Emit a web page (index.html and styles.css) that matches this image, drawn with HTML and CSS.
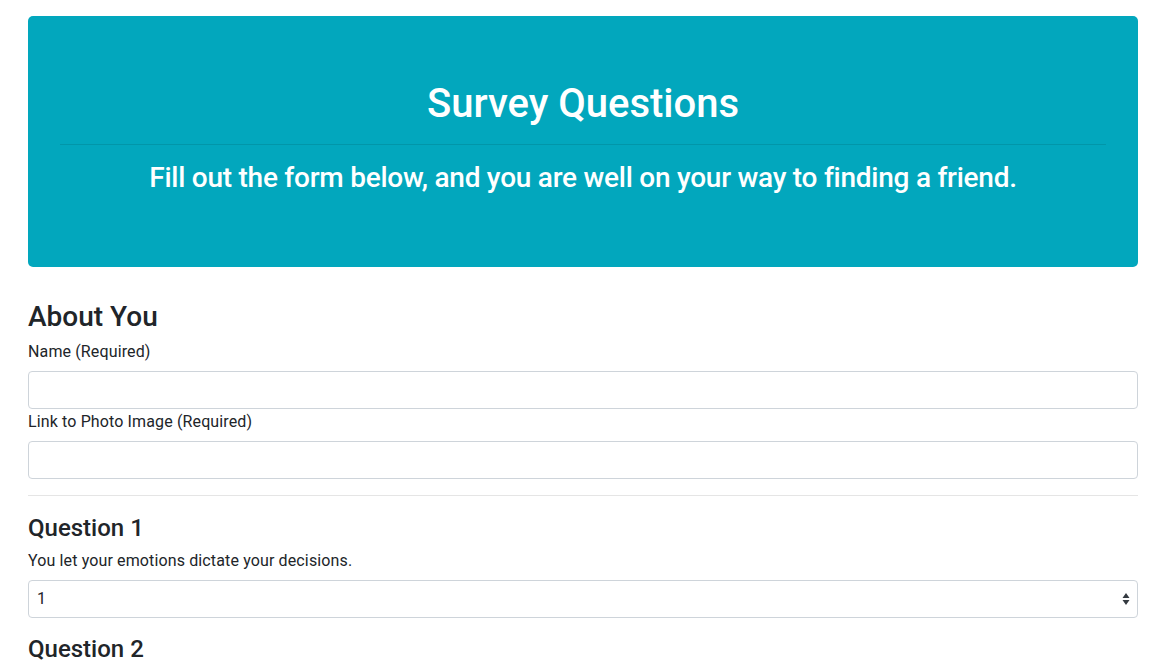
FILE: index.html
```html
<!DOCTYPE html>
<html lang="en">
<head>
<meta charset="utf-8">
<title>Survey Questions</title>
<link rel="stylesheet" href="styles.css">
</head>
<body>
<div class="container">
  <header class="jumbotron">
    <h1 class="title">Survey Questions</h1>
    <hr class="jumbo-rule">
    <h3 class="subtitle">Fill out the form below, and you are well on your way to finding a friend.</h3>
  </header>

  <form class="survey">
    <h3 class="section-title">About You</h3>
    <label class="field-label" for="name">Name (Required)</label>
    <input class="field-input" id="name" type="text">
    <label class="field-label" for="photo">Link to Photo Image (Required)</label>
    <input class="field-input" id="photo" type="text">

    <hr class="divider">

    <div class="question">
      <h4 class="question-title">Question 1</h4>
      <label class="field-label" for="q1">You let your emotions dictate your decisions.</label>
      <div class="select-wrap">
        <select class="field-select" id="q1">
          <option>1</option>
          <option>2</option>
          <option>3</option>
          <option>4</option>
          <option>5</option>
        </select>
        <svg class="select-arrows" width="8" height="14" viewBox="0 0 8 14"><path d="M4 1 L7.5 6 H0.5 Z M4 13 L7.5 8 H0.5 Z" fill="#343a40"/></svg>
      </div>
    </div>

    <div class="question">
      <h4 class="question-title">Question 2</h4>
      <label class="field-label" for="q2">You find it easy to introduce yourself to other people.</label>
      <div class="select-wrap">
        <select class="field-select" id="q2">
          <option>1</option>
          <option>2</option>
          <option>3</option>
          <option>4</option>
          <option>5</option>
        </select>
        <svg class="select-arrows" width="8" height="14" viewBox="0 0 8 14"><path d="M4 1 L7.5 6 H0.5 Z M4 13 L7.5 8 H0.5 Z" fill="#343a40"/></svg>
      </div>
    </div>
  </form>
</div>
</body>
</html>
```

FILE: styles.css
```css
* { box-sizing: border-box; }

html, body {
  margin: 0;
  padding: 0;
  background: #fff;
}

body {
  font-family: Roboto, "Helvetica Neue", "Liberation Sans", Arial, sans-serif;
  font-size: 16px;
  line-height: 1.5;
  color: #212529;
}

.container {
  padding: 16px 24px 40px 28px;
}

.jumbotron {
  background: #02a7bd;
  border-radius: 5px;
  padding: 64px 32px;
  text-align: center;
  color: #fff;
  margin-bottom: 33px;
}

.title {
  margin: 0 0 16px;
  font-size: 40px;
  font-weight: 500;
  line-height: 1.2;
}

.jumbo-rule {
  margin: 0 0 16px;
  border: 0;
  border-top: 1px solid rgba(0, 0, 0, 0.1);
}

.subtitle {
  margin: 0 0 8px;
  font-size: 28px;
  font-weight: 500;
  line-height: 1.2;
  letter-spacing: -0.25px;
}

.survey {
  display: flex;
  flex-direction: column;
}

.section-title {
  margin: 0 0 7px;
  font-size: 28px;
  font-weight: 500;
  line-height: 1.2;
}

.question-title {
  margin: 0 0 6px;
  font-size: 24px;
  font-weight: 500;
  line-height: 1.2;
}

.field-label {
  display: block;
  margin-bottom: 7px;
  font-size: 16px;
  line-height: 24px;
  letter-spacing: 0.13px;
}

.field-input,
.field-select {
  display: block;
  width: 100%;
  height: 38px;
  padding: 6px 12px;
  font-family: inherit;
  font-size: 16px;
  line-height: 1.5;
  color: #495057;
  background: #fff;
  border: 1px solid #ced4da;
  border-radius: 4px;
  margin: 0;
}

.field-input + .field-label {
  margin-top: 1px;
}

.field-select {
  -webkit-appearance: none;
  appearance: none;
  padding-left: 8px;
  color: #212529;
}

.divider {
  margin: 16px 0 18px;
  border: 0;
  border-top: 1px solid rgba(0, 0, 0, 0.1);
}

.question {
  margin-bottom: 17px;
}

.select-wrap {
  position: relative;
}

.select-arrows {
  position: absolute;
  right: 8px;
  top: 12px;
  pointer-events: none;
}
```
